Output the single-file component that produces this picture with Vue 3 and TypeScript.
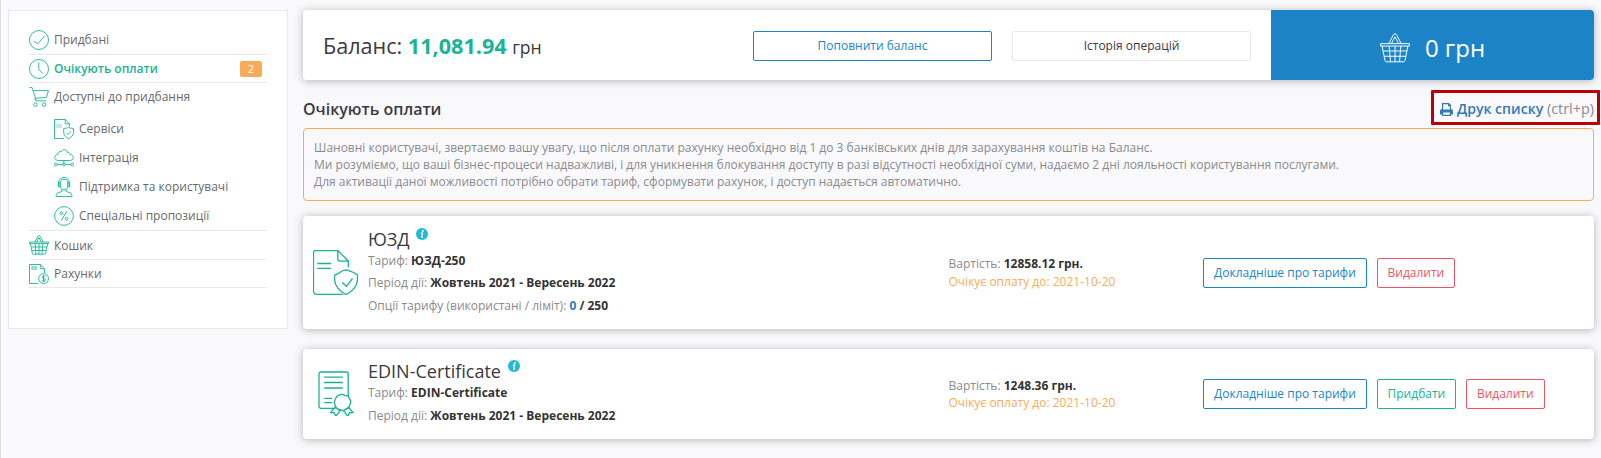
<script setup lang="ts">
interface MenuItem {
  label: string
  icon: string
  active?: boolean
  badge?: number
  children?: MenuItem[]
}
interface Action {
  label: string
  tone: 'blue' | 'green' | 'red'
}
interface Product {
  name: string
  icon: string
  tariff: string
  period: string
  used?: number
  limit?: number
  price: string
  due: string
  actions: Action[]
}

const menu: MenuItem[] = [
  { label: 'Придбані', icon: 'check' },
  { label: 'Очікують оплати', icon: 'clock', active: true, badge: 2 },
  {
    label: 'Доступні до придбання',
    icon: 'cart',
    children: [
      { label: 'Сервіси', icon: 'service' },
      { label: 'Інтеграція', icon: 'cloud' },
      { label: 'Підтримка та користувачі', icon: 'support' },
      { label: 'Спеціальні пропозиції', icon: 'percent' },
    ],
  },
  { label: 'Кошик', icon: 'basket' },
  { label: 'Рахунки', icon: 'invoice' },
]

const products: Product[] = [
  {
    name: 'ЮЗД',
    icon: 'shield',
    tariff: 'ЮЗД-250',
    period: 'Жовтень 2021 - Вересень 2022',
    used: 0,
    limit: 250,
    price: '12858.12 грн.',
    due: '2021-10-20',
    actions: [
      { label: 'Докладніше про тарифи', tone: 'blue' },
      { label: 'Видалити', tone: 'red' },
    ],
  },
  {
    name: 'EDIN-Certificate',
    icon: 'certificate',
    tariff: 'EDIN-Certificate',
    period: 'Жовтень 2021 - Вересень 2022',
    price: '1248.36 грн.',
    due: '2021-10-20',
    actions: [
      { label: 'Докладніше про тарифи', tone: 'blue' },
      { label: 'Придбати', tone: 'green' },
      { label: 'Видалити', tone: 'red' },
    ],
  },
]

const icons: Record<string, string> = {
  check: '<circle cx="10" cy="10" r="9.5"/><path d="M4.5 11l4 3 7-8"/>',
  clock: '<circle cx="10" cy="10" r="9.5"/><path d="M9.8 3.2v7.3l3.7 4"/>',
  cart: '<path d="M.3.6h2.8l4 13.2h10.2M4.1 3.6h15.4l-2.2 6.9-11.2.8M7 13.8c-1.4-.7-1.2-2 0-2.5"/><circle cx="6.4" cy="17.6" r="1.8"/><circle cx="15.1" cy="17.6" r="1.8"/>',
  service: '<path d="M10 19.5H.5V.5h10.7l4.3 4.3v2.7M11.2.5v4.3h4.3"/><path fill="#c5ebe3" stroke="none" d="M2 5h6v4H2z"/><path d="M14.6 8.1c1.3 1 2.8 1.3 4.9 1.3v3.9c0 3-2 5.1-4.9 6.4-2.9-1.3-4.9-3.4-4.9-6.4V9.4c2.1 0 3.6-.3 4.9-1.3zM12.4 14l1.6 1.6 3-3.4"/>',
  cloud: '<path d="M9.9 15v1.5M4.2 12.5C-.3 12.3-.4 6.8 4 6.3 4 3.7 6.5 3 7.3 3.8 8.3.8 13.1 1 13.4 4.5c1.5-.4 2.7.5 2.8 2.1 4.3.3 4.1 5.8-.4 5.9zM9.9 12.5V15M3 16.5h5.3m3.3 0H17"/><circle cx="1.8" cy="16.5" r="1.4"/><circle cx="9.9" cy="16.5" r="1.4"/><circle cx="18.2" cy="16.5" r="1.4"/>',
  support: '<path d="M4.5 9.2V6.5C4.5 2.8 6.8.5 10 .5s5.5 2.3 5.5 6v2.7M6.2 4.8c1.1-3.3 6.5-3.3 7.6 0v3.7c0 5.8-7.6 5.8-7.6 0zM4.3 5.8h1.9v4H4.3zM13.8 5.8h1.9v4h-1.900zM8 12v2.4l-5 1.8c-.6.3-.9 1.3-.9 3.3h15.8c0-2-.3-3-.9-3.3l-5-1.8V12"/>',
  percent: '<circle cx="10" cy="10" r="9.4"/><path d="M12.8 5.2L7.2 14.8"/><circle cx="7.4" cy="7.3" r="1.4"/><circle cx="12.5" cy="12.7" r="1.4"/>',
  basket: '<path d="M.4 7.1h19.2v1.6H.4zM1.4 8.7l1.9 9.5c.1.7.5 1 1 1h11.4c.5 0 .9-.3 1-1l1.9-9.5M2.1 12h15.8M2.9 15.5h14.2M6.1 8.7l.9 10.5M10 8.7v10.5M13.9 8.7L13 19.2M5.8 7.1l3-5.6c.7-1.3 1.7-1.3 2.4 0l3 5.6M7.5 7.1L10 2.6l2.5 4.5"/>',
  invoice: '<path d="M9.2 19.5H.5V.5h10.8l4.2 4.2V9M11.3.5v4.2h4.2M2.2 3h6M2.2 5h6"/><circle cx="14.6" cy="14.6" r="4.9"/><path d="M16.4 12.6c-1.2-1-3.4-.6-3.3.7.1 1.5 3.2.9 3.3 2.6 0 1.4-2.4 1.7-3.6.5M14.6 11.1v7"/>',
  shield: '<path d="M30 44.3H3.500a3 3 0 01-3-3V2.500a2 2 0 012-2h22.300l10.500 10.600v6.200M24.800.5v8.600a2 2 0 002 2h8.500M4.200 13.500h14M4.200 18.400h14"/><path d="M33 19.900c3.100 1.200 7 1.200 11.500 5.200v4.100c0 6.500-4.900 12.400-11.400 15.300-6.600-2.900-11.500-8.800-11.500-15.300v-4.100c5.500-.9 6-5.200 11.400-5.200zM29.300 32.500l4 3.800 6.200-7.800"/>',
  certificate: '<path d="M17.5 37.300H3a2 2 0 01-2-2V3a2 2 0 012-2h25.200a2 2 0 012 2v22M6.200 6.100h18.600M6.200 11.500h18.600M6.200 17h18.600M6.200 27.300h8M6.200 31.700h8"/><path d="M23.900 23.200l3 1.100 3.200.8 1.500 2.800 1.300 3-1 3-1 3-2.900 1.500-2.900 1.200-3.100-1-3.200-1.100-1.600-2.900-.9-3.100 1-3.100 1.300-2.900 2.600-1.400zM17.200 36.200l-4.500 5.300 3.700.4 1.300 3.500 4.400-5.500zM30.500 36.200l4.500 5.300-3.700.4-1.300 3.500-4.400-5.500z"/>',
}
</script>

<template>
  <div class="page">
    <aside class="sidebar">
      <ul class="menu">
        <li v-for="item in menu" :key="item.label" :class="['entry', item.icon]">
          <a class="link" :class="{ active: item.active }">
            <svg class="icon" viewBox="0 0 20 20" v-html="icons[item.icon]"></svg>
            <span>{{ item.label }}</span>
            <span v-if="item.badge" class="badge">{{ item.badge }}</span>
          </a>
          <ul v-if="item.children" class="submenu">
            <li v-for="child in item.children" :key="child.label" class="link">
              <svg class="icon" :class="child.icon" viewBox="0 0 20 20" v-html="icons[child.icon]"></svg>
              <span>{{ child.label }}</span>
            </li>
          </ul>
        </li>
      </ul>
    </aside>

    <main class="content">
      <section class="panel balance">
        <div class="sum">Баланс: <b>11,081.94</b> <small>грн</small></div>
        <a class="btn wide blue">Поповнити баланс</a>
        <a class="btn wide plain">Історія операцій</a>
        <a class="total">
          <svg class="total-icon" viewBox="0 0 20 20" v-html="icons.basket"></svg>
          <span>0 грн</span>
        </a>
      </section>

      <header class="heading">
        <h1>Очікують оплати</h1>
        <div class="print">
          <svg class="printer" viewBox="0 0 13 13">
            <path fill-rule="evenodd" d="M2 0h7l2 2v4a2 2 0 012 2v3.500h-2V13H2v-1.500H0V8a2 2 0 012-2zM3.200 1.200v5.300h6.600V3.300H8V1.200zM3.200 9.500v2.300h6.600V9.500z" />
          </svg>
          <b>Друк списку</b> <span>(ctrl+p)</span>
        </div>
      </header>

      <section class="notice">
        <p>Шановні користувачі, звертаємо вашу увагу, що після оплати рахунку необхідно від 1 до 3 банківських днів для зарахування коштів на Баланс.</p>
        <p>Ми розуміємо, що ваші бізнес-процеси надважливі, і для уникнення блокування доступу в разі відсутності необхідної суми, надаємо 2 дні лояльності користування послугами.</p>
        <p>Для активації даної можливості потрібно обрати тариф, сформувати рахунок, і доступ надається автоматично.</p>
      </section>

      <section v-for="p in products" :key="p.name" class="panel product" :class="p.icon">
        <svg class="product-icon" viewBox="0 0 45 45" v-html="icons[p.icon]"></svg>
        <div class="info">
          <h2>
            {{ p.name }}
            <svg class="tip" viewBox="0 0 12 12">
              <circle cx="6" cy="6" r="6" fill="#23b7d9" />
              <circle cx="6.800" cy="2.900" r="1" fill="#fff" />
              <path d="M4.700 5.100h1.900L5.700 9.100h1.200" fill="none" stroke="#fff" stroke-width="1.200" />
            </svg>
          </h2>
          <p>Тариф: <b>{{ p.tariff }}</b></p>
          <p>Період дії: <b>{{ p.period }}</b></p>
          <p v-if="p.limit">Опції тарифу (використані / ліміт): <b><i>{{ p.used }}</i> / {{ p.limit }}</b></p>
        </div>
        <div class="price">
          <p>Вартість: <b>{{ p.price }}</b></p>
          <p class="due">Очікує оплату до: {{ p.due }}</p>
        </div>
        <div class="actions">
          <a v-for="a in p.actions" :key="a.label" class="btn" :class="a.tone">{{ a.label }}</a>
        </div>
      </section>
    </main>
  </div>
</template>

<style>
body {
  background: #f9f9fc;
}
</style>

<style scoped>
* {
  box-sizing: border-box;
  margin: 0;
  padding: 0;
}
.page {
  display: flex;
  align-items: flex-start;
  gap: 15px;
  height: 458px;
  padding: 10px 7px 0 7px;
  border-left: 1px solid #dcdcde;
  overflow: hidden;
  font: 12px/17px "Open Sans", sans-serif;
  color: #676a6c;
}
ul {
  list-style: none;
}
.sidebar {
  flex: none;
  width: 280px;
  height: 319px;
  padding: 15px 20px;
  background: #fff;
  border: 1px solid #e7e7f5;
}
.entry {
  border-bottom: 1px solid #e7eaec;
}
.link {
  display: flex;
  align-items: center;
  gap: 5px;
  height: 27px;
}
.entry.check > .link,
.entry.basket > .link {
  height: 28px;
}
.entry.check > .link {
  padding-bottom: 1px;
}
.link.active {
  color: #1ab394;
  font-weight: 600;
}
.icon {
  flex: none;
  width: 20px;
  height: 20px;
  fill: none;
  stroke: #1ab394;
  stroke-width: 0.9;
}
.badge {
  width: 22px;
  height: 16px;
  margin: 0 5px 0 auto;
  border-radius: 2px;
  background: #f8ac59;
  color: #fff;
  font-size: 11px;
  font-weight: 400;
  line-height: 16px;
  text-align: center;
}
.submenu {
  padding: 4px 0 0 25px;
}
.submenu .link {
  height: 29px;
}
.content {
  flex: none;
  width: 1291px;
}
.panel {
  background: #fff;
  border-radius: 4px;
  box-shadow: 0 1px 8px rgba(0, 0, 0, 0.28);
}
.balance {
  display: flex;
  align-items: center;
  height: 70px;
}
.sum {
  flex: none;
  width: 450px;
  padding: 2px 0 0 20px;
  color: #3a3a3e;
  font-size: 21.6px;
  line-height: 30px;
}
.sum b {
  color: #1ab394;
}
.sum small {
  font-size: 17.6px;
}
.btn {
  flex: none;
  height: 30px;
  padding: 0 10px;
  border: 1px solid currentColor;
  border-radius: 2px;
  line-height: 28px;
  text-align: center;
  white-space: nowrap;
}
.blue {
  color: #1c84c6;
}
.green {
  color: #1ab394;
}
.red {
  color: #ed5565;
}
.wide {
  width: 239px;
  margin: 1px 20px 0 0;
}
.plain {
  border-color: #e7eaec;
  color: #3a3a3e;
}
.total {
  display: flex;
  flex: 1;
  align-items: center;
  justify-content: center;
  gap: 15px;
  height: 70px;
  padding: 5px 0 0 0;
  border-radius: 0 4px 4px 0;
  background: #1c84c6;
  color: #fff;
  font-size: 24px;
}
.total-icon {
  width: 30px;
  height: 30px;
  fill: none;
  stroke: #fff;
  stroke-width: 0.65;
}
.heading {
  display: flex;
  justify-content: space-between;
  height: 48px;
  padding-top: 10px;
}
h1 {
  color: #3a3a3e;
  font-size: 16px;
  font-weight: 600;
  line-height: 39px;
}
.print {
  height: 35px;
  margin-right: -6px;
  padding: 0 3px 0 6px;
  border: 3px solid #b80008;
  border-radius: 1px;
  color: #8a8a8d;
  font-size: 14.4px;
  line-height: 32px;
}
.print b {
  color: #337ab7;
  font-size: 14.1px;
  font-weight: 600;
}
.printer {
  width: 13px;
  height: 13px;
  margin-right: 4px;
  fill: #337ab7;
  vertical-align: -2px;
}
.notice {
  height: 73px;
  margin-bottom: 15px;
  padding: 10px;
  border: 1px solid #f8ac59;
  border-radius: 4px;
  color: #8a8a8d;
}
.product {
  display: flex;
  align-items: center;
  height: 113px;
  margin-bottom: 20px;
}
.product.certificate {
  height: 90px;
}
.product-icon {
  flex: none;
  width: 45px;
  height: 45px;
  margin-left: 10px;
  fill: none;
  stroke: #1ab394;
  stroke-width: 1.3;
}
.certificate .product-icon {
  margin: 0 -5px 2px 15px;
}
.info {
  flex: none;
  align-self: flex-start;
  width: 590.5px;
  padding: 12px 0 0 10px;
  color: #8a8a8d;
}
.certificate .info {
  padding-top: 11px;
}
h2 {
  height: 24px;
  color: #3a3a3e;
  font-size: 18px;
  font-weight: 400;
  line-height: 21px;
}
.tip {
  width: 12px;
  height: 12px;
  margin-left: 2px;
  vertical-align: 6px;
}
.info p {
  height: 23px;
}
.shield .info p:nth-of-type(1) {
  height: 22px;
}
b {
  color: #333;
}
.info i {
  color: #337ab7;
  font-style: normal;
}
.price {
  flex: none;
  width: 254.5px;
  padding-bottom: 1px;
  color: #8a8a8d;
}
.shield .price {
  padding: 1px 0 0;
  line-height: 18px;
}
.price .due {
  color: #f8ac59;
}
.actions {
  display: flex;
  gap: 9.7px;
}
</style>
